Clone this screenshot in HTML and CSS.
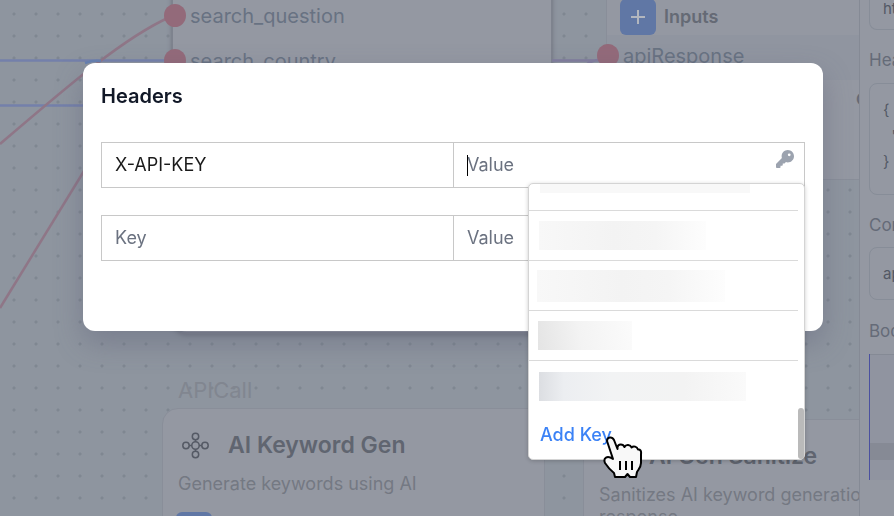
FILE: index.html
```html
<!DOCTYPE html>
<html lang="en">
<head>
<meta charset="utf-8">
<title>Headers</title>
<link rel="stylesheet" href="styles.css">
</head>
<body>
<div class="app">
  <main class="canvas">
    <section class="node node-search"></section>
    <section class="node node-api">
      <h2 class="inputs-title"><button class="add" aria-label="Add input"><svg width="16" height="16" viewBox="0 0 16 16"><path d="M8 1v14M1 8h14" stroke="#b2b6be" stroke-width="2"/></svg></button>Inputs</h2>
      <div class="band"></div>
    </section>
    <svg class="wires" width="860" height="516" viewBox="0 0 860 516" fill="none">
      <path d="M0 60.500H175M0 105.500H175" stroke="#7480ab" stroke-width="2.500"/>
      <path d="M0 144C70 84 125 37 170 17" stroke="#8f7687" stroke-width="2.500"/>
      <path d="M0 308L84 171" stroke="#8f7687" stroke-width="2.500"/>
      <path d="M85 63q8-3 16-2" stroke="#6680b0" stroke-width="2.500"/>
      <path d="M552 60.500H600M587 64q6-4 12-4" stroke="#807c9d" stroke-width="2.500"/>
    </svg>
    <div class="port port-question"><i class="dot"></i>search_question</div>
    <div class="port port-country"><i class="dot"></i>search_country</div>
    <div class="port port-response"><i class="dot"></i>apiResponse</div>
    <span class="sliver">O</span>
    <div class="caption">APICall</div>
    <section class="node node-keyword">
      <h2 class="node-title">
        <svg class="node-icon" width="28" height="28" viewBox="0 0 28 28" fill="none" stroke="#555a65" stroke-width="1.500"><circle cx="13.500" cy="14.500" r="3.700"/><circle cx="13.500" cy="5.500" r="3.200"/><circle cx="13.500" cy="23.500" r="3.200"/><circle cx="4" cy="14.500" r="3.200"/><circle cx="23" cy="14.500" r="3.200"/><path d="M13.500 8.500v2.500M13.500 18V20.500M7 14.500h3M17 14.500h3"/></svg>
        AI Keyword Gen
      </h2>
      <p class="node-text">Generate keywords using AI</p>
      <button class="add" aria-label="Add"></button>
    </section>
    <section class="node node-sanitize">
      <h2 class="node-title">
        <svg class="node-icon" width="28" height="28" viewBox="0 0 28 28" fill="none" stroke="#555a65" stroke-width="1.500"><circle cx="14" cy="14" r="10"/></svg>
        AI Gen Sanitize
      </h2>
      <p class="node-text">Sanitizes AI keyword generation response</p>
    </section>
  </main>
  <aside class="panel">
    <div class="box box-url">https</div>
    <h3>Headers</h3>
    <pre class="box box-code">{
  "
}</pre>
    <h3>Content</h3>
    <div class="box box-type">application</div>
    <h3>Body</h3>
    <div class="editor"></div>
  </aside>
</div>
<div class="overlay">
  <div class="modal" role="dialog" aria-labelledby="title">
    <h1 id="title">Headers</h1>
    <div class="pair">
      <input aria-label="Key" placeholder="Key" value="X-API-KEY">
      <div class="value">
        <input aria-label="Value" placeholder="Value">
        <span class="caret"></span>
        <button class="key" aria-label="Choose key"><svg width="18" height="18" viewBox="0 0 512 512"><path fill="#9ca3af" d="M336 352c97.200 0 176-78.800 176-176S433.200 0 336 0S160 78.800 160 176c0 18.700 2.900 36.800 8.300 53.700L7 391c-4.500 4.500-7 10.600-7 17v80c0 13.300 10.700 24 24 24h80c13.300 0 24-10.700 24-24V448h40c13.300 0 24-10.700 24-24V384h40c6.400 0 12.500-2.500 17-7l33.300-33.300c16.900 5.400 35 8.300 53.700 8.300zM376 96a40 40 0 1 1 0 80 40 40 0 1 1 0-80z"/></svg></button>
        <div class="menu">
          <ul>
            <li class="first"><span class="mask mask-a"></span></li>
            <li><span class="mask mask-b"></span></li>
            <li><span class="mask mask-c"></span></li>
            <li><span class="mask mask-d"></span></li>
            <li><span class="mask mask-e"></span></li>
            <li><button class="add-key">Add Key</button></li>
          </ul>
          <span class="thumb"></span>
          <svg class="pointer" width="40" height="44" viewBox="0 0 40 44" stroke="#000" stroke-linejoin="round" stroke-linecap="round"><path fill="#f8f8f8" stroke-width="2" d="M4 5C4 1 9 0 11 4L14.500 13V11C15 8 20 7.500 21.500 11C23 8 27.500 8.500 28.500 11.500C30.500 9.500 34 10.500 35 13.500C37 13 38.500 15 38 18V27C38 31 36 33 34 36L33 41H27L24.500 38L22 41H12L11 37C7 34 4 30 2 27C0 22 4 19 10 23L4 5Z"/><path d="M17 25v9M23 25v9M29 25v9" stroke-width="2" stroke-linecap="butt"/></svg>
        </div>
      </div>
    </div>
    <div class="pair">
      <input aria-label="Second key" placeholder="Key">
      <div class="value"><input aria-label="Second value" placeholder="Value"></div>
    </div>
  </div>
</div>
</body>
</html>
```
FILE: styles.css
```css
* { box-sizing: border-box; }
body { margin: 0; font-family: Inter, "Liberation Sans", sans-serif; overflow: hidden; }
h1, h2, h3, p, pre, ul { margin: 0; padding: 0; }
button { border: 0; padding: 0; background: none; font: inherit; cursor: pointer; }

.app { display: flex; height: 100vh; overflow: hidden; }
.canvas {
  position: relative; flex: 1; min-width: 0; overflow: hidden;
  background: #8e959f radial-gradient(circle at 50% 50%, #7f8791 1px, transparent 2px) 3px 3px / 22px 22px;
}
.wires { position: absolute; left: 0; top: 0; }
.node { position: absolute; background: #9498a2; border: 1px solid #898e99; }
.node-search { left: 171px; top: -20px; width: 382px; height: 354px; border: 2px solid #7e838e; border-radius: 16px; box-shadow: 0 2px 4px #777c87; }
.node-api { left: 606px; top: -20px; width: 300px; height: 200px; padding: 18px 13px; }
.node-keyword { left: 162px; top: 408px; width: 383px; height: 160px; border-radius: 16px; padding: 20px 15px; }
.node-sanitize { left: 583px; top: 419px; width: 320px; height: 160px; border-radius: 16px; padding: 20px 15px; }
.inputs-title { display: flex; align-items: center; gap: 8px; font-size: 18px; font-weight: 600; line-height: 36px; color: #656a75; }
.add { display: grid; place-items: center; width: 36px; height: 36px; border-radius: 6px; background: #6077a5; }
.band { margin: 0 -13px; height: 45px; background: #9095a0; }
.node-title { display: flex; align-items: center; gap: 18px; padding-left: 4px; font-size: 23px; line-height: 32px; font-weight: 600; color: #606570; white-space: nowrap; }
.node-text { margin: 12px 0 17px; font-size: 18px; line-height: 22px; color: #747983; }
.node-keyword .add { margin-left: -2px; }
.caption { position: absolute; left: 178px; top: 376px; font-size: 22px; line-height: 28px; color: #818690; }
.port { position: absolute; display: flex; align-items: center; gap: 4px; font-size: 20px; line-height: 22px; color: #687282; }
.dot { width: 22px; height: 23px; border-radius: 50%; background: #936a7a; }
.port-question { left: 164px; top: 4px; }
.port-country { left: 164px; top: 49px; }
.port-response { left: 597px; top: 44px; }
.sliver { position: absolute; left: 856px; top: 89px; font-size: 16px; line-height: 20px; font-weight: 600; color: #656a75; }

.panel { flex: 0 0 35px; overflow: hidden; padding: 0 0 0 9px; border-left: 1px solid #858a95; background: #9498a2; color: #5f6571; }
.panel h3 { font-size: 17px; font-weight: 400; line-height: 24px; color: #656b78; }
.box { width: 200px; border: 1px solid #878d98; border-radius: 8px; padding-left: 13px; font-size: 15px; color: #535965; }
.box-url { height: 30px; line-height: 18px; margin-bottom: 18px; border-top: 0; border-radius: 0 0 8px 8px; }
.box-code { margin: 11px 0 18px; height: 112px; padding-top: 13px; font-family: Inter, sans-serif; line-height: 26px; }
.box-type { margin: 10px 0 19px; height: 53px; line-height: 52px; }
.editor { margin-top: 11px; width: 200px; height: 126px; border-left: 1px solid #4a50a0; background: linear-gradient(#858a95 1px, #9094a0 1px, #9094a0 89px, #868a95 89px, #868a95 106px, #9094a0 106px); }

.overlay { position: fixed; inset: 0; padding: 63px 71px 0 83px; }
.modal { padding: 18px 18px 70px; border-radius: 12px; background: #fff; box-shadow: 0 12px 28px rgba(90, 92, 118, .4); }
h1 { margin-bottom: 31px; font-size: 20px; line-height: 30px; font-weight: 600; color: #111827; }
.pair { display: grid; grid-template-columns: 1fr 1fr; height: 46px; border: 1px solid #c8c8c8; }
.pair + .pair { margin-top: 27px; }
.value { position: relative; border-left: 1px solid #c8c8c8; }
.pair input { width: 100%; height: 44px; padding: 0 13px 2px; border: 0; outline: 0; background: none; font: 18px/24px Inter, sans-serif; color: #1a1a1a; }
.pair input::placeholder { color: #6b7280; opacity: 1; }
.caret { position: absolute; left: 13px; top: 12px; width: 1px; height: 21px; background: #000; }
.key { position: absolute; right: 10px; top: 7px; width: 18px; height: 18px; }
.key svg { display: block; }
.menu { position: absolute; z-index: 1; right: -1px; top: 40px; width: 277px; border: 1px solid #d4d4d4; border-radius: 5px; background: #fff; box-shadow: 0 1px 4px rgba(0, 0, 0, .2); }
.menu ul { padding-right: 6px; list-style: none; }
.menu li { display: flex; align-items: center; height: 50px; padding-left: 10px; border-bottom: 1px solid #dadada; }
.menu .first { height: 27px; align-items: flex-start; }
.menu li:nth-last-child(2) { border: 0; }
.menu li:last-child { border: 0; height: 48px; padding-left: 11px; }
.mask { height: 29px; background: linear-gradient(90deg, #f8f8f8, #f3f3f3 45%, #f5f5f5 70%, #fdfdfd); }
.mask-a { width: 210px; height: 9px; margin-left: 1px; background: #f8f8f8; }
.mask-b { width: 167px; }
.mask-c { width: 188px; height: 32px; margin-left: -2px; }
.mask-d { width: 94px; margin-left: -1px; background: linear-gradient(80deg, #e4e4e4, #f3f3f3 45%, #fbfbfb); }
.mask-e { width: 207px; background: linear-gradient(90deg, #dcdee2, #eceef1 12%, #f2f3f4 35%, #f3f3f3 70%, #fafafa); }
.add-key { font-size: 18px; line-height: 24px; font-weight: 500; color: #3b82f6; }
.thumb { position: absolute; right: 0; bottom: 0; width: 6px; height: 51px; border-radius: 3px; background: #bababa; }
.pointer { position: absolute; left: 74px; top: 252px; }
```
